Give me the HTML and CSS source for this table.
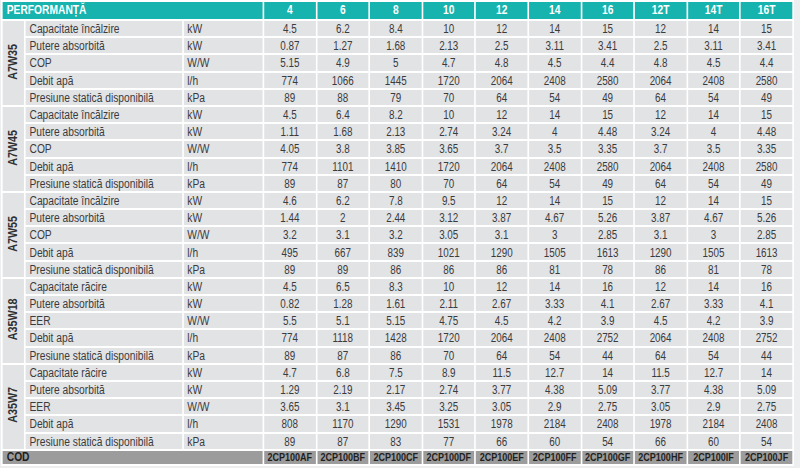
FILE: index.html
```html
<!DOCTYPE html>
<html lang="ro">
<head>
<meta charset="utf-8">
<title>Performanță</title>
<link rel="stylesheet" href="styles.css">
</head>
<body>
<div class="frame">
<table class="perf">
  <colgroup>
    <col class="c-grp"><col class="c-lbl"><col class="c-unit">
    <col class="c-val"><col class="c-val"><col class="c-val"><col class="c-val"><col class="c-val">
    <col class="c-val"><col class="c-val"><col class="c-val"><col class="c-val"><col class="c-val">
  </colgroup>
  <thead>
    <tr class="head">
      <th colspan="3" class="title">PERFORMANȚĂ</th>
      <th>4</th><th>6</th><th>8</th><th>10</th><th>12</th><th>14</th><th>16</th><th>12T</th><th>14T</th><th>16T</th>
    </tr>
  </thead>
  <tbody>
    <tr><th rowspan="5" class="grp"><span>A7W35</span></th><td class="lbl">Capacitate încălzire</td><td class="unit">kW</td><td>4.5</td><td>6.2</td><td>8.4</td><td>10</td><td>12</td><td>14</td><td>15</td><td>12</td><td>14</td><td>15</td></tr>
    <tr><td class="lbl">Putere absorbită</td><td class="unit">kW</td><td>0.87</td><td>1.27</td><td>1.68</td><td>2.13</td><td>2.5</td><td>3.11</td><td>3.41</td><td>2.5</td><td>3.11</td><td>3.41</td></tr>
    <tr><td class="lbl">COP</td><td class="unit">W/W</td><td>5.15</td><td>4.9</td><td>5</td><td>4.7</td><td>4.8</td><td>4.5</td><td>4.4</td><td>4.8</td><td>4.5</td><td>4.4</td></tr>
    <tr><td class="lbl">Debit apă</td><td class="unit">l/h</td><td>774</td><td>1066</td><td>1445</td><td>1720</td><td>2064</td><td>2408</td><td>2580</td><td>2064</td><td>2408</td><td>2580</td></tr>
    <tr><td class="lbl">Presiune statică disponibilă</td><td class="unit">kPa</td><td>89</td><td>88</td><td>79</td><td>70</td><td>64</td><td>54</td><td>49</td><td>64</td><td>54</td><td>49</td></tr>

    <tr><th rowspan="5" class="grp"><span>A7W45</span></th><td class="lbl">Capacitate încălzire</td><td class="unit">kW</td><td>4.5</td><td>6.4</td><td>8.2</td><td>10</td><td>12</td><td>14</td><td>15</td><td>12</td><td>14</td><td>15</td></tr>
    <tr><td class="lbl">Putere absorbită</td><td class="unit">kW</td><td>1.11</td><td>1.68</td><td>2.13</td><td>2.74</td><td>3.24</td><td>4</td><td>4.48</td><td>3.24</td><td>4</td><td>4.48</td></tr>
    <tr><td class="lbl">COP</td><td class="unit">W/W</td><td>4.05</td><td>3.8</td><td>3.85</td><td>3.65</td><td>3.7</td><td>3.5</td><td>3.35</td><td>3.7</td><td>3.5</td><td>3.35</td></tr>
    <tr><td class="lbl">Debit apă</td><td class="unit">l/h</td><td>774</td><td>1101</td><td>1410</td><td>1720</td><td>2064</td><td>2408</td><td>2580</td><td>2064</td><td>2408</td><td>2580</td></tr>
    <tr><td class="lbl">Presiune statică disponibilă</td><td class="unit">kPa</td><td>89</td><td>87</td><td>80</td><td>70</td><td>64</td><td>54</td><td>49</td><td>64</td><td>54</td><td>49</td></tr>

    <tr><th rowspan="5" class="grp"><span>A7W55</span></th><td class="lbl">Capacitate încălzire</td><td class="unit">kW</td><td>4.6</td><td>6.2</td><td>7.8</td><td>9.5</td><td>12</td><td>14</td><td>15</td><td>12</td><td>14</td><td>15</td></tr>
    <tr><td class="lbl">Putere absorbită</td><td class="unit">kW</td><td>1.44</td><td>2</td><td>2.44</td><td>3.12</td><td>3.87</td><td>4.67</td><td>5.26</td><td>3.87</td><td>4.67</td><td>5.26</td></tr>
    <tr><td class="lbl">COP</td><td class="unit">W/W</td><td>3.2</td><td>3.1</td><td>3.2</td><td>3.05</td><td>3.1</td><td>3</td><td>2.85</td><td>3.1</td><td>3</td><td>2.85</td></tr>
    <tr><td class="lbl">Debit apă</td><td class="unit">l/h</td><td>495</td><td>667</td><td>839</td><td>1021</td><td>1290</td><td>1505</td><td>1613</td><td>1290</td><td>1505</td><td>1613</td></tr>
    <tr><td class="lbl">Presiune statică disponibilă</td><td class="unit">kPa</td><td>89</td><td>89</td><td>86</td><td>86</td><td>86</td><td>81</td><td>78</td><td>86</td><td>81</td><td>78</td></tr>

    <tr><th rowspan="5" class="grp"><span>A35W18</span></th><td class="lbl">Capacitate răcire</td><td class="unit">kW</td><td>4.5</td><td>6.5</td><td>8.3</td><td>10</td><td>12</td><td>14</td><td>16</td><td>12</td><td>14</td><td>16</td></tr>
    <tr><td class="lbl">Putere absorbită</td><td class="unit">kW</td><td>0.82</td><td>1.28</td><td>1.61</td><td>2.11</td><td>2.67</td><td>3.33</td><td>4.1</td><td>2.67</td><td>3.33</td><td>4.1</td></tr>
    <tr><td class="lbl">EER</td><td class="unit">W/W</td><td>5.5</td><td>5.1</td><td>5.15</td><td>4.75</td><td>4.5</td><td>4.2</td><td>3.9</td><td>4.5</td><td>4.2</td><td>3.9</td></tr>
    <tr><td class="lbl">Debit apă</td><td class="unit">l/h</td><td>774</td><td>1118</td><td>1428</td><td>1720</td><td>2064</td><td>2408</td><td>2752</td><td>2064</td><td>2408</td><td>2752</td></tr>
    <tr><td class="lbl">Presiune statică disponibilă</td><td class="unit">kPa</td><td>89</td><td>87</td><td>86</td><td>70</td><td>64</td><td>54</td><td>44</td><td>64</td><td>54</td><td>44</td></tr>

    <tr><th rowspan="5" class="grp"><span>A35W7</span></th><td class="lbl">Capacitate răcire</td><td class="unit">kW</td><td>4.7</td><td>6.8</td><td>7.5</td><td>8.9</td><td>11.5</td><td>12.7</td><td>14</td><td>11.5</td><td>12.7</td><td>14</td></tr>
    <tr><td class="lbl">Putere absorbită</td><td class="unit">kW</td><td>1.29</td><td>2.19</td><td>2.17</td><td>2.74</td><td>3.77</td><td>4.38</td><td>5.09</td><td>3.77</td><td>4.38</td><td>5.09</td></tr>
    <tr><td class="lbl">EER</td><td class="unit">W/W</td><td>3.65</td><td>3.1</td><td>3.45</td><td>3.25</td><td>3.05</td><td>2.9</td><td>2.75</td><td>3.05</td><td>2.9</td><td>2.75</td></tr>
    <tr><td class="lbl">Debit apă</td><td class="unit">l/h</td><td>808</td><td>1170</td><td>1290</td><td>1531</td><td>1978</td><td>2184</td><td>2408</td><td>1978</td><td>2184</td><td>2408</td></tr>
    <tr><td class="lbl">Presiune statică disponibilă</td><td class="unit">kPa</td><td>89</td><td>87</td><td>83</td><td>77</td><td>66</td><td>60</td><td>54</td><td>66</td><td>60</td><td>54</td></tr>
  </tbody>
  <tfoot>
    <tr class="foot">
      <th colspan="3" class="title">COD</th>
      <td>2CP100AF</td><td>2CP100BF</td><td>2CP100CF</td><td>2CP100DF</td><td>2CP100EF</td><td>2CP100FF</td><td>2CP100GF</td><td>2CP100HF</td><td>2CP100IF</td><td>2CP100JF</td>
    </tr>
  </tfoot>
</table>
</div>
</body>
</html>
```
FILE: styles.css
```css
html, body {
  margin: 0;
  padding: 0;
  background: #eceeef;
  overflow: hidden;
}
body {
  font-family: "Liberation Sans", Arial, sans-serif;
  color: #3a3b3d;
  font-size: 12.5px;
  width: 800px;
  height: 468px;
}
.frame {
  width: 800px;
  height: 468px;
  overflow: hidden;
}
/* the table is laid out wide and condensed horizontally,
   imitating the narrow typeface of the reference */
.perf {
  margin: 0 0 0 1px;
  table-layout: fixed;
  border-collapse: separate;
  border-spacing: 2.44px 2px;
  background: #ffffff;
  width: 967px;
  transform: scaleX(0.82);
  transform-origin: 0 0;
}
.c-grp { width: 25.6px; }
.c-lbl { width: 190.2px; }
.c-unit { width: 95.1px; }
.c-val { width: 62.2px; }

.perf td, .perf th {
  padding: 0;
  background: #e2e3e5;
  height: 15.2px;
  line-height: 14px;
  text-align: center;
  font-weight: normal;
  white-space: nowrap;
  overflow: hidden;
  font-size: 12px;
}
.perf tbody td {
  padding-top: 1px;
  height: 14.2px;
}
.perf td.lbl {
  text-align: left;
  padding-left: 5px;
  font-size: 12.5px;
}
.perf td.unit {
  text-align: left;
  padding-left: 4px;
  font-size: 12.5px;
}
.perf th.grp {
  font-weight: bold;
  color: #2f3032;
}
.perf th.grp span {
  display: inline-block;
  writing-mode: vertical-rl;
  transform: scale(1.22, 0.86) rotate(180deg);
  font-size: 12.5px;
  line-height: 14px;
}
.head th {
  background: #17b3ae;
  color: #ffffff;
  font-weight: bold;
  height: 17px;
  line-height: 17px;
  font-size: 12.5px;
}
.head th.title, .foot th.title {
  text-align: left;
  padding-left: 5px;
}
.foot th, .foot td {
  background: #9c9c9c;
  color: #1f1f1f;
  font-weight: bold;
  height: 13px;
  line-height: 13px;
  font-size: 11px;
}
.foot th.title {
  font-size: 12.5px;
}
```
